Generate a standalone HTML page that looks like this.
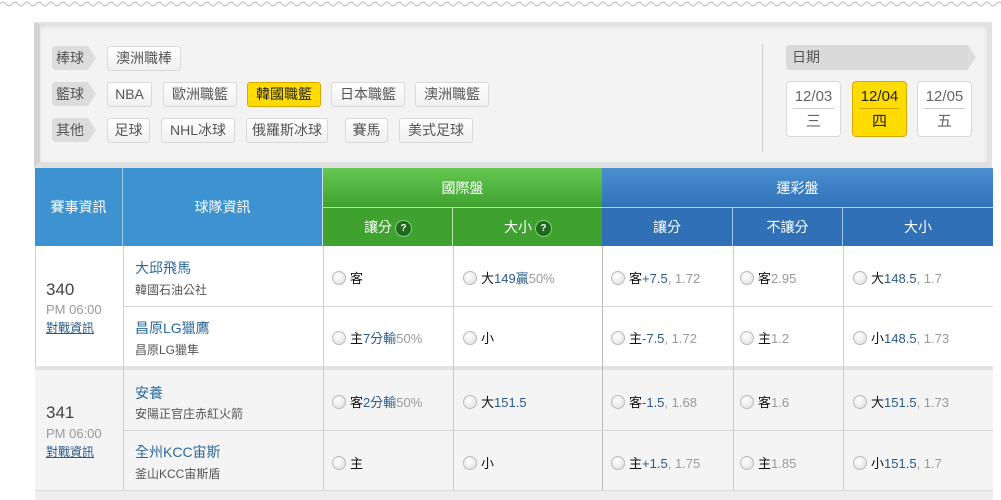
<!DOCTYPE html>
<html><head><meta charset="utf-8"><style>
*{box-sizing:border-box;margin:0;padding:0}
body{width:1001px;height:500px;overflow:hidden;background:#fff;font-family:"Liberation Sans","Noto Sans CJK TC",sans-serif;position:relative;font-size:13px;color:#333}
.a{position:absolute}
.lab{position:absolute;height:24px;background:#dcdcdc;color:#555;font-size:14px;line-height:24px;padding-left:4px;border-radius:4px 0 0 4px}
.lab:after{content:"";position:absolute;right:-8px;top:0;border-left:8px solid #dcdcdc;border-top:12px solid transparent;border-bottom:12px solid transparent}
.b{position:absolute;height:25px;border:1px solid #d8d8d8;border-radius:3px;background:linear-gradient(#fff,#f0f0f0);color:#555;font-size:14px;line-height:23px;text-align:center}
.b.y{background:#ffdc00;border-color:#d9a800;color:#222}
.d{position:absolute;width:55px;height:56px;border:1px solid #d8d8d8;border-radius:4px;background:#fff;text-align:center;color:#666;font-size:15px}
.d.y{background:#ffdc00;border-color:#d9a800;color:#222}
.d .t{height:27px;line-height:30px;border-bottom:1px solid #ccc;margin:0 6px}
.d.y .t{border-color:#d9a800}
.d .w{line-height:26px}
.h{position:absolute;color:#fff;font-size:14px;text-align:center;border-right:1px solid #9cc6e6}
.r{display:inline-block;width:14px;height:14px;border-radius:50%;border:1px solid #bbb;background:radial-gradient(circle at 40% 35%,#fff,#ddd);vertical-align:-2px;margin-right:4px}
.bl{color:#2a5a8a}.g{color:#999}.k{color:#111}
.q{display:inline-block;width:15px;height:15px;border-radius:50%;background:#1f6a1a;color:#fff;font-size:10px;line-height:15px;font-weight:bold;margin-left:4px;vertical-align:1px;box-shadow:0 0 0 1px #8c8}
.o{position:absolute;font-size:13px}
</style></head><body>
<svg class="a" style="left:0;top:0" width="1001" height="10"><path d="M0 4 q3 -4 6 0 t6 0 t6 0 t6 0 t6 0 t6 0 t6 0 t6 0 t6 0 t6 0 t6 0 t6 0 t6 0 t6 0 t6 0 t6 0 t6 0 t6 0 t6 0 t6 0 t6 0 t6 0 t6 0 t6 0 t6 0 t6 0 t6 0 t6 0 t6 0 t6 0 t6 0 t6 0 t6 0 t6 0 t6 0 t6 0 t6 0 t6 0 t6 0 t6 0 t6 0 t6 0 t6 0 t6 0 t6 0 t6 0 t6 0 t6 0 t6 0 t6 0 t6 0 t6 0 t6 0 t6 0 t6 0 t6 0 t6 0 t6 0 t6 0 t6 0 t6 0 t6 0 t6 0 t6 0 t6 0 t6 0 t6 0 t6 0 t6 0 t6 0 t6 0 t6 0 t6 0 t6 0 t6 0 t6 0 t6 0 t6 0 t6 0 t6 0 t6 0 t6 0 t6 0 t6 0 t6 0 t6 0 t6 0 t6 0 t6 0 t6 0 t6 0 t6 0 t6 0 t6 0 t6 0 t6 0 t6 0 t6 0 t6 0 t6 0 t6 0 t6 0 t6 0 t6 0 t6 0 t6 0 t6 0 t6 0 t6 0 t6 0 t6 0 t6 0 t6 0 t6 0 t6 0 t6 0 t6 0 t6 0 t6 0 t6 0 t6 0 t6 0 t6 0 t6 0 t6 0 t6 0 t6 0 t6 0 t6 0 t6 0 t6 0 t6 0 t6 0 t6 0 t6 0 t6 0 t6 0 t6 0 t6 0 t6 0 t6 0 t6 0 t6 0 t6 0 t6 0 t6 0 t6 0 t6 0 t6 0 t6 0 t6 0 t6 0 t6 0 t6 0 t6 0 t6 0 t6 0 t6 0 t6 0 t6 0 t6 0 t6 0 t6 0 t6 0 t6 0 t6 0 t6 0 t6 0 t6 0 t6 0 t6 0 t6 0 t6 0 t6 0 t6 0" fill="none" stroke="#bbb" stroke-width="1"/></svg>
<div class="a" style="left:34px;top:22px;width:958px;height:146px;background:#f3f3f3;border-top:2px solid #e4e4e4;border-left:6px solid #d4d4d4;border-right:5px solid #e2e2e2;border-bottom:6px solid #e0e0e0;box-shadow:inset 0 3px 4px #ddd"></div>
<div class="lab" style="left:52px;top:46px;width:36px">棒球</div>
<div class="lab" style="left:52px;top:82px;width:36px">籃球</div>
<div class="lab" style="left:52px;top:118px;width:36px">其他</div>
<div class="b" style="left:107px;top:46px;width:74px">澳洲職棒</div>
<div class="b" style="left:107px;top:82px;width:45px">NBA</div>
<div class="b" style="left:163px;top:82px;width:74px">歐洲職籃</div>
<div class="b y" style="left:247px;top:82px;width:74px">韓國職籃</div>
<div class="b" style="left:331px;top:82px;width:74px">日本職籃</div>
<div class="b" style="left:415px;top:82px;width:74px">澳洲職籃</div>
<div class="b" style="left:107px;top:118px;width:43px">足球</div>
<div class="b" style="left:161px;top:118px;width:74px">NHL冰球</div>
<div class="b" style="left:246px;top:118px;width:82px">俄羅斯冰球</div>
<div class="b" style="left:345px;top:118px;width:43px">賽馬</div>
<div class="b" style="left:399px;top:118px;width:74px">美式足球</div>
<div class="a" style="left:762px;top:44px;width:1px;height:108px;background:#d0d0d0"></div>
<div class="lab" style="left:786px;top:45px;width:182px;height:25px;background:#dadada;padding-left:6px;font-size:14px">日期</div>
<div class="d" style="left:786px;top:81px"><div class="t">12/03</div><div class="w">三</div></div>
<div class="d y" style="left:852px;top:81px"><div class="t">12/04</div><div class="w">四</div></div>
<div class="d" style="left:917px;top:81px"><div class="t">12/05</div><div class="w">五</div></div>
<div class="h" style="left:35px;top:168px;width:88px;height:78px;line-height:78px;background:#3d93cf">賽事資訊</div>
<div class="h" style="left:123px;top:168px;width:200px;height:78px;line-height:78px;background:#3d93cf;border-right:1px solid #cde">球隊資訊</div>
<div class="h" style="left:323px;top:168px;width:279px;height:40px;line-height:40px;background:linear-gradient(#66c752,#3fa22f);border-bottom:1px solid #b8e0b0;border-right:none">國際盤</div>
<div class="h" style="left:323px;top:208px;width:130px;height:38px;line-height:38px;background:#3fa22f;border-right:1px solid #b8e0b0">讓分<span class="q">?</span></div>
<div class="h" style="left:453px;top:208px;width:149px;height:38px;line-height:38px;background:#3fa22f;border-right:none">大小<span class="q">?</span></div>
<div class="h" style="left:602px;top:168px;width:391px;height:40px;line-height:40px;background:linear-gradient(#4a8fd0,#2f72b8);border-bottom:1px solid #b8d0ea;border-right:none">運彩盤</div>
<div class="h" style="left:602px;top:208px;width:131px;height:38px;line-height:38px;background:#3070b6">讓分</div>
<div class="h" style="left:733px;top:208px;width:110px;height:38px;line-height:38px;background:#3070b6">不讓分</div>
<div class="h" style="left:843px;top:208px;width:150px;height:38px;line-height:38px;background:#3070b6;border-right:none">大小</div>
<div class="a" style="left:35px;top:246px;width:958px;height:254px;background:#fff;border-left:1px solid #ccc"></div>
<div class="a" style="left:35px;top:366px;width:958px;height:4px;background:#e2e2e2"></div>
<div class="a" style="left:35px;top:370px;width:958px;height:121px;background:#f4f4f4"></div>
<div class="a" style="left:35px;top:490px;width:958px;height:10px;background:#eee;border-top:1px solid #ddd"></div>
<div class="a" style="left:123px;top:246px;width:1px;height:244px;background:#ccc"></div>
<div class="a" style="left:323px;top:246px;width:1px;height:244px;background:#ccc"></div>
<div class="a" style="left:453px;top:246px;width:1px;height:244px;background:#ccc"></div>
<div class="a" style="left:602px;top:246px;width:1px;height:244px;background:#bbb"></div>
<div class="a" style="left:733px;top:246px;width:1px;height:244px;background:#ccc"></div>
<div class="a" style="left:843px;top:246px;width:1px;height:244px;background:#ccc"></div>
<div class="a" style="left:123px;top:306px;width:870px;height:1px;background:#d6d6d6"></div>
<div class="a" style="left:123px;top:430px;width:870px;height:1px;background:#d6d6d6"></div>
<div class="a" style="left:46px;top:280px;font-size:17px;color:#444">340</div>
<div class="a" style="left:46px;top:302px;font-size:13px;color:#999">PM 06:00</div>
<div class="a" style="left:46px;top:319px;font-size:12px;color:#2a5a8a;text-decoration:underline">對戰資訊</div>
<div class="a" style="left:46px;top:403px;font-size:17px;color:#444">341</div>
<div class="a" style="left:46px;top:426px;font-size:13px;color:#999">PM 06:00</div>
<div class="a" style="left:46px;top:443px;font-size:12px;color:#2a5a8a;text-decoration:underline">對戰資訊</div>
<div class="a" style="left:135px;top:258px;font-size:14px;color:#2a6a9a">大邱飛馬</div>
<div class="a" style="left:135px;top:281px;font-size:12px;color:#555">韓國石油公社</div>
<div class="a" style="left:135px;top:318px;font-size:14px;color:#2a6a9a">昌原LG獵鷹</div>
<div class="a" style="left:135px;top:341px;font-size:12px;color:#555">昌原LG獵隼</div>
<div class="a" style="left:135px;top:383px;font-size:14px;color:#2a6a9a">安養</div>
<div class="a" style="left:135px;top:405px;font-size:12px;color:#555">安陽正官庄赤紅火箭</div>
<div class="a" style="left:135px;top:442px;font-size:14px;color:#2a6a9a">全州KCC宙斯</div>
<div class="a" style="left:135px;top:465px;font-size:12px;color:#555">釜山KCC宙斯盾</div>
<div class="o" style="left:332px;top:268px"><span class="r"></span><span class="k">客</span></div>
<div class="o" style="left:463px;top:268px"><span class="r"></span><span class="k">大</span><span class="bl">149贏</span><span class="g">50%</span></div>
<div class="o" style="left:611px;top:268px"><span class="r"></span><span class="k">客</span><span class="bl">+7.5</span><span class="g">, 1.72</span></div>
<div class="o" style="left:740px;top:268px"><span class="r"></span><span class="k">客</span><span class="g">2.95</span></div>
<div class="o" style="left:853px;top:268px"><span class="r"></span><span class="k">大</span><span class="bl">148.5</span><span class="g">, 1.7</span></div>
<div class="o" style="left:332px;top:328px"><span class="r"></span><span class="k">主</span><span class="bl">7分輸</span><span class="g">50%</span></div>
<div class="o" style="left:463px;top:328px"><span class="r"></span><span class="k">小</span></div>
<div class="o" style="left:611px;top:328px"><span class="r"></span><span class="k">主</span><span class="bl">-7.5</span><span class="g">, 1.72</span></div>
<div class="o" style="left:740px;top:328px"><span class="r"></span><span class="k">主</span><span class="g">1.2</span></div>
<div class="o" style="left:853px;top:328px"><span class="r"></span><span class="k">小</span><span class="bl">148.5</span><span class="g">, 1.73</span></div>
<div class="o" style="left:332px;top:392px"><span class="r"></span><span class="k">客</span><span class="bl">2分輸</span><span class="g">50%</span></div>
<div class="o" style="left:463px;top:392px"><span class="r"></span><span class="k">大</span><span class="bl">151.5</span></div>
<div class="o" style="left:611px;top:392px"><span class="r"></span><span class="k">客</span><span class="bl">-1.5</span><span class="g">, 1.68</span></div>
<div class="o" style="left:740px;top:392px"><span class="r"></span><span class="k">客</span><span class="g">1.6</span></div>
<div class="o" style="left:853px;top:392px"><span class="r"></span><span class="k">大</span><span class="bl">151.5</span><span class="g">, 1.73</span></div>
<div class="o" style="left:332px;top:453px"><span class="r"></span><span class="k">主</span></div>
<div class="o" style="left:463px;top:453px"><span class="r"></span><span class="k">小</span></div>
<div class="o" style="left:611px;top:453px"><span class="r"></span><span class="k">主</span><span class="bl">+1.5</span><span class="g">, 1.75</span></div>
<div class="o" style="left:740px;top:453px"><span class="r"></span><span class="k">主</span><span class="g">1.85</span></div>
<div class="o" style="left:853px;top:453px"><span class="r"></span><span class="k">小</span><span class="bl">151.5</span><span class="g">, 1.7</span></div>
</body></html>
